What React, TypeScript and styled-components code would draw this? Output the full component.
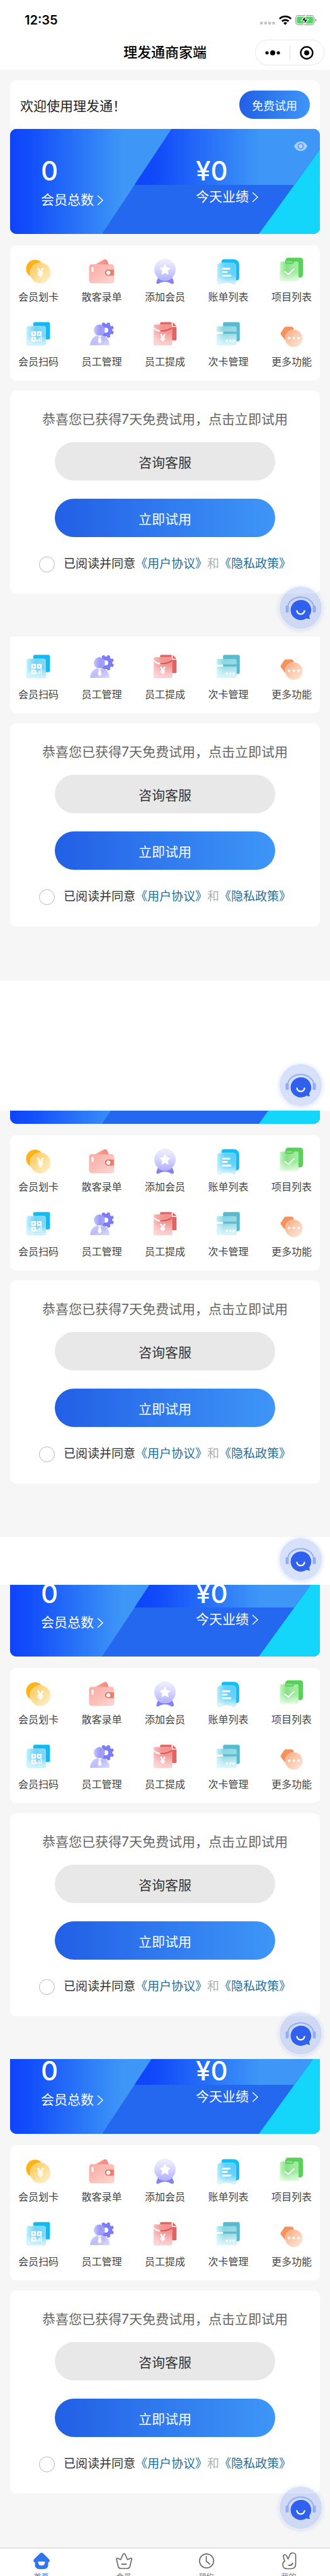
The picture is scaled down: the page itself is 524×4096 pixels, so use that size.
import React, { useId } from "react";
import styled, { createGlobalStyle } from "styled-components";

const GlobalStyle = createGlobalStyle`
  *, *::before, *::after { box-sizing: border-box; }
  body {
    margin: 0;
    background: #fff;
    color: #333;
    font-family: Inter, "Noto Sans CJK SC", sans-serif;
  }
  button { font: inherit; border: 0; padding: 0; cursor: pointer; }
  a { text-decoration: none; }
  svg { display: block; overflow: visible; }
`;

/* ---------- header ---------- */

const Header = styled.header`
  background: #fff;
  height: 111px;
`;

const StatusBar = styled.div`
  display: flex;
  align-items: center;
  justify-content: space-between;
  height: 63px;
  padding: 0 21px 0 39px;
`;

const Clock = styled.time`
  font-size: 20px;
  font-weight: 600;
  line-height: 24px;
  color: #000;
`;

const StatusIcons = styled.div`
  display: flex;
  align-items: center;
  gap: 6px;
`;

const NavBar = styled.div`
  display: grid;
  grid-template-columns: 1fr auto 1fr;
  padding: 0 9px;
`;

const Title = styled.h1`
  grid-column: 2;
  margin: 0;
  font-size: 22px;
  font-weight: 500;
  line-height: 41px;
  color: #000;
`;

const Capsule = styled.div`
  justify-self: end;
  display: flex;
  align-items: center;
  width: 110px;
  height: 41px;
  border: 1px solid #e8e8e8;
  border-radius: 21px;
`;

const CapsuleButton = styled.button`
  flex: 1;
  display: flex;
  justify-content: center;
  align-items: center;
  height: 24px;
  background: none;

  & + & { border-left: 1px solid #ddd; }
`;

/* ---------- screens ---------- */

const Screen = styled.section<{ $bottom: number; $top?: number }>`
  position: relative;
  display: flex;
  flex-direction: column;
  background: #f6f6f6;
  padding: ${(p) => p.$top ?? 0}px 16px ${(p) => p.$bottom}px;
`;

const Blank = styled.div<{ $height: number }>`
  position: relative;
  height: ${(p) => p.$height}px;
  background: #fff;
`;

const Welcome = styled.div`
  display: flex;
  align-items: center;
  justify-content: space-between;
  height: 77px;
  padding: 0 16px;
  background: #fff;
  border-radius: 10px 10px 0 0;
  font-size: 21px;
  color: #222;
`;

const TrialPill = styled.button`
  width: 112px;
  height: 45px;
  border-radius: 22px;
  background: linear-gradient(90deg, #225fe6, #3e96f7);
  color: #fff;
  font-size: 18px;
`;

/* ---------- banner ---------- */

const BannerView = styled.div<{ $height: number }>`
  display: flex;
  flex-direction: column;
  justify-content: flex-end;
  height: ${(p) => p.$height}px;
  overflow: hidden;
  margin-bottom: 18px;
`;

const BannerCard = styled.div`
  position: relative;
  flex: none;
  display: grid;
  grid-template-columns: 1fr 1fr;
  height: 167px;
  border-radius: 10px;
  overflow: hidden;
  color: #fff;
`;

const BannerArt = styled.svg`
  position: absolute;
  inset: 0;
  width: 100%;
  height: 100%;
`;

const Stat = styled.div`
  position: relative;
  display: flex;
  flex-direction: column;
  align-items: flex-start;
  gap: 4px;
  padding: 45px 0 0 49px;
`;

const StatValue = styled.strong`
  font-size: 42px;
  font-weight: 500;
  line-height: 44px;
`;

const StatLink = styled.a<{ $line: number }>`
  display: flex;
  align-items: center;
  gap: 5px;
  color: #fff;
  font-size: 21px;
  line-height: ${(p) => p.$line}px;
`;

const EyeButton = styled.button`
  position: absolute;
  top: 20px;
  right: 20px;
  background: none;
`;

/* ---------- feature grid ---------- */

const Features = styled.div<{ $cut?: boolean }>`
  display: flex;
  flex-direction: column;
  gap: 27px;
  padding: ${(p) => (p.$cut ? 27 : 21)}px 13px 19px;
  margin-bottom: 16px;
  background: #fff;
  border-radius: ${(p) => (p.$cut ? "0 0 10px 10px" : "10px")};
`;

const FeatureRow = styled.div<{ $gap: number }>`
  display: flex;
  justify-content: space-between;

  & > a { gap: ${(p) => p.$gap}px; }
`;

const Feature = styled.a`
  display: flex;
  flex-direction: column;
  align-items: center;
  color: #444;
  font-size: 16px;
  line-height: 22px;
`;

/* ---------- trial card ---------- */

const TrialCard = styled.div`
  display: flex;
  flex-direction: column;
  align-items: center;
  padding: 31px 0 34px;
  background: #fff;
  border-radius: 10px;
`;

const Notice = styled.p`
  margin: 0 0 21px;
  font-size: 21px;
  line-height: 30px;
  color: #666;
  white-space: nowrap;
`;

const WideButton = styled.button<{ $primary?: boolean }>`
  width: 71%;
  height: 61px;
  border-radius: 31px;
  font-size: 21px;
  color: ${(p) => (p.$primary ? "#fff" : "#333")};
  background: ${(p) => (p.$primary ? "linear-gradient(90deg, #225fe6, #3e96f7)" : "#e8e8e8")};

  & + & { margin-top: 29px; }
`;

const Agreement = styled.div`
  display: flex;
  align-items: center;
  margin-top: 30px;
  font-size: 19px;
  line-height: 26px;
  color: #b2b2b2;
  white-space: nowrap;

  label { color: #333; }
  a { color: #1b6f9f; }
`;

const Tick = styled.input`
  appearance: none;
  width: 25px;
  height: 25px;
  margin: 0 14px 0 0;
  border: 1px solid #b8b8b8;
  border-radius: 50%;
  background: #fff;
`;

/* ---------- floating support button ---------- */

const SupportButton = styled.button<{ $bottom: number }>`
  position: absolute;
  right: 12px;
  bottom: ${(p) => p.$bottom}px;
  z-index: 1;
  width: 69px;
  height: 69px;
  border: 1px solid #f0f4ff;
  border-radius: 50%;
  background: rgba(60, 103, 232, 0.2);
  box-shadow: 0 1px 6px rgba(60, 103, 232, 0.2);
  display: flex;
  align-items: center;
  justify-content: center;
`;

/* ---------- tab bar ---------- */

const TabBar = styled.nav`
  display: grid;
  grid-template-columns: repeat(4, 1fr);
  height: 45px;
  overflow: hidden;
  background: #fff;
  border-top: 1px solid #ccc;
`;

const Tab = styled.a<{ $active?: boolean }>`
  display: flex;
  flex-direction: column;
  align-items: center;
  gap: 5px;
  padding-top: 7px;
  font-size: 12px;
  line-height: 16px;
  color: ${(p) => (p.$active ? "#3274ee" : "#777")};
`;

/* ---------- drawings ---------- */

const DefsSvg = styled.svg`
  position: absolute;
  width: 0;
  height: 0;
`;

type Stop = [string, string, number?];

const Grad = ({ id, stops, dir = "v" }: { id: string; stops: Stop[]; dir?: "v" | "h" | "d" }) => (
  <linearGradient id={id} x1="0" y1="0" x2={dir === "v" ? "0" : "1"} y2={dir === "h" ? "0" : "1"}>
    {stops.map(([offset, color, opacity]) => (
      <stop key={offset} offset={offset} stopColor={color} stopOpacity={opacity ?? 1} />
    ))}
  </linearGradient>
);

const Defs = () => (
  <DefsSvg aria-hidden="true">
    <defs>
      <Grad id="panelLeft" dir="h" stops={[["0", "#0f44fa"], ["0.12", "#124efa"], ["0.7", "#3e97f7"], ["1", "#3e97f7"]]} />
      <Grad id="panelRight" dir="h" stops={[["0", "#0f44fa"], ["0.1", "#1048fa"], ["0.68", "#3e97f7"], ["1", "#3e97f7"]]} />
      <Grad id="coin" dir="d" stops={[["0", "#fdc552"], ["0.45", "#fddb8d"], ["1", "#fff3d4"]]} />
      <Grad id="walletBack" dir="h" stops={[["0", "#f9a597"], ["1", "#f4867b"]]} />
      <Grad id="wallet" dir="d" stops={[["0", "#fbaaa2"], ["0.6", "#fcc3bd"], ["1", "#fdd8d4"]]} />
      <Grad id="clasp" dir="h" stops={[["0", "#df5a48"], ["1", "#f68474"]]} />
      <Grad id="medal" stops={[["0", "#f1f0ff"], ["0.5", "#d6d5fd"], ["1", "#b1affc"]]} />
      <Grad id="bill" dir="h" stops={[["0", "#aeeaff"], ["0.4", "#5fd3fd"], ["1", "#55cdfb"]]} />
      <Grad id="billFade" stops={[["0", "#ffffff", 0], ["0.6", "#ffffff", 0.1], ["1", "#ffffff", 0.8]]} />
      <Grad id="board" dir="h" stops={[["0", "#c5f6c4"], ["0.35", "#86e086"], ["0.6", "#97e896"], ["1", "#a5eea4"]]} />
      <Grad id="boardFade" stops={[["0", "#ffffff", 0], ["0.55", "#ffffff", 0], ["1", "#dfffdd", 0.9]]} />
      <Grad id="qr" dir="h" stops={[["0", "#bdeffe"], ["0.45", "#67cff8"], ["1", "#7ad8fb"]]} />
      <Grad id="qrFade" stops={[["0", "#ffffff", 0.1], ["0.5", "#ffffff", 0], ["1", "#e2f9ff", 0.9]]} />
      <Grad id="head" dir="h" stops={[["0", "#c6c6fb"], ["0.55", "#9a99f9"], ["1", "#a5a4fb"]]} />
      <Grad id="torso" dir="d" stops={[["0", "#d3d3fc"], ["0.5", "#bdbcfb"], ["1", "#dcdcfd"]]} />
      <Grad id="envelope" dir="h" stops={[["0", "#f9bcbc"], ["0.45", "#f39593"], ["1", "#f2908f"]]} />
      <Grad id="envelopeFade" stops={[["0", "#ffffff", 0], ["0.4", "#ffffff", 0.05], ["1", "#ffe3e3", 0.8]]} />
      <Grad id="card" dir="h" stops={[["0", "#c1eef6"], ["0.35", "#86d5e1"], ["1", "#93dae6"]]} />
      <Grad id="cardFade" stops={[["0", "#ffffff", 0], ["0.4", "#ffffff", 0.1], ["1", "#e0fbff", 0.9]]} />
      <Grad id="more" dir="d" stops={[["0", "#f7a474"], ["0.4", "#fac5a6"], ["1", "#feeadd"]]} />
    </defs>
  </DefsSvg>
);

const Art = ({ children }: { children: React.ReactNode }) => (
  <svg width="40" height="40" viewBox="0 0 190 190" aria-hidden="true">
    {children}
  </svg>
);

const Yuan = ({ x, y, size }: { x: number; y: number; size: number }) => (
  <text x={x} y={y} fontSize={size} fontFamily="Inter, sans-serif" fontWeight="700" fill="#fff" textAnchor="middle">
    ¥
  </text>
);

const CoinIcon = () => (
  <Art>
    <circle cx="69" cy="77" r="67" fill="#fdb41c" />
    <circle cx="109" cy="109" r="77" fill="url(#coin)" stroke="#fde5ac" strokeWidth="3" />
    <Yuan x={111} y={143} size={94} />
  </Art>
);

const WalletIcon = () => (
  <Art>
    <path d="M44 48 112 10q20-10 28 8l12 30z" fill="url(#walletBack)" />
    <rect x="4" y="45" width="185" height="140" rx="18" fill="url(#wallet)" stroke="#fbb5ae" strokeWidth="3" />
    <rect x="21" y="64" width="15" height="38" rx="6" fill="#fff" />
    <path d="M190 84h-44a23 23 0 0 0 0 46h44z" fill="url(#clasp)" />
    <circle cx="147" cy="107" r="16" fill="#fff" />
  </Art>
);

const MedalIcon = () => (
  <Art>
    <path d="M44 140 30 178q-2 16 14 14 50-32 102 0 16 2 16-14l-14-38z" fill="#8281f8" />
    <circle cx="95" cy="86" r="80" fill="url(#medal)" stroke="#dddcfd" strokeWidth="3" />
    <path
      d="m95 47 11 23 26 4-19 18 5 26-23-13-23 13 5-26-19-18 26-4z"
      fill="#fff"
      stroke="#fff"
      strokeWidth="6"
      strokeLinejoin="round"
    />
  </Art>
);

const billSheet =
  "M16 58q0-24 24-24h90q24 0 24 24v116q0 20-20 18-14-12-49-12t-49 12q-20 2-20-18z";

const BillIcon = () => (
  <Art>
    <path d="M66 6h68q46 0 46 46v92q0 23-26 23H46V26q0-20 20-20z" fill="#13bdf6" />
    <path d={billSheet} fill="url(#bill)" />
    <path d={billSheet} fill="url(#billFade)" stroke="#a9e8fd" strokeWidth="3" />
    <path d="M57 77h49M57 102h29M57 129h57" stroke="#fff" strokeWidth="14" strokeLinecap="round" />
  </Art>
);

const boardSheet =
  "M17 24h34v6q0 6 8 6h44q8 0 8-12h26q10 0 10 10v124q0 10-10 10H17q-10 0-10-10V34q0-10 10-10z";

const BoardIcon = () => (
  <Art>
    <rect x="49" y="-6" width="132" height="150" rx="20" fill="#5bd05a" />
    <path d={boardSheet} fill="url(#board)" />
    <path d={boardSheet} fill="url(#boardFade)" />
    <rect x="50" y="14" width="58" height="24" rx="9" fill="#7ee07d" stroke="#48bd49" strokeWidth="5" />
    <path d="m44 100 27 20 42-40" fill="none" stroke="#fff" strokeWidth="10" strokeLinecap="round" strokeLinejoin="round" />
  </Art>
);

const QrIcon = () => (
  <Art>
    <rect x="56" y="11" width="126" height="130" rx="12" fill="#12b9f5" />
    <rect x="8" y="41" width="141" height="144" rx="12" fill="url(#qr)" />
    <rect x="8" y="41" width="141" height="144" rx="12" fill="url(#qrFade)" stroke="#b3ecfe" strokeWidth="3" />
    <path d="M47 85h24v24H47zM90 85h24v24H90zM47 128h24v24H47z" fill="none" stroke="#fff" strokeWidth="12" />
    <path d="M85 158v-16M101 158v-29M116 158v-41" stroke="#fff" strokeWidth="8" />
  </Art>
);

const StaffIcon = () => (
  <Art>
    <circle cx="130" cy="71" r="48" fill="#7d7cf7" />
    {[22, 67, 112, 157].map((angle) => (
      <rect key={angle} x="118" y="11" width="24" height="120" rx="6" fill="#7d7cf7" transform={`rotate(${angle} 130 71)`} />
    ))}
    <circle cx="128" cy="71" r="19" fill="#fff" />
    <path d="M10 185C10 140 42 109 84 109s73 31 73 76z" fill="url(#torso)" />
    <circle cx="80" cy="71" r="42" fill="url(#head)" />
    <path d="M70 112h24l-3 11H73zM75 127h14l8 32-15 13-14-13z" fill="#fff" />
  </Art>
);

const EnvelopeIcon = () => (
  <Art>
    <path d="M66 11h79v36h37v94q0 8-8 8H58V19q0-8 8-8z" fill="#e06462" />
    <path d="m154 12 28 28h-28z" fill="#df5e5d" />
    <rect x="10" y="29" width="138" height="156" rx="10" fill="url(#envelope)" />
    <rect x="10" y="29" width="138" height="156" rx="10" fill="url(#envelopeFade)" stroke="#f9c2c2" strokeWidth="2" />
    <path d="M58 72q52 4 90-24v12q-38 26-90 20z" fill="#dd5c5b" />
    <path d="M10 49q18 20 48 23v11q-32-4-48-24z" fill="#fff" />
    <Yuan x={79} y={158} size={76} />
  </Art>
);

const CardIcon = () => (
  <Art>
    <rect x="58" y="11" width="126" height="144" rx="12" fill="#59bacd" />
    <path d="M10 41h138q12 0 12 12v120q0 12-12 12H10z" fill="url(#card)" />
    <path d="M10 41h138q12 0 12 12v120q0 12-12 12H10z" fill="url(#cardFade)" />
    <rect x="58" y="83" width="102" height="15" fill="#5fb9ca" />
    <rect x="10" y="85" width="48" height="14" fill="#fff" />
    <path d="M78 145h15v15H78zM106 145h15v15h-15zM130 145h15v15h-15z" fill="#fff" />
  </Art>
);

const MoreIcon = () => (
  <Art>
    <path d="M50 45h46q8 0 12 8l14 40-66 54q-8 3-13-6L14 104q-4-7 0-14l26-39q4-6 10-6z" fill="#f3935f" />
    <circle cx="112" cy="133" r="65" fill="url(#more)" stroke="#fddcc8" strokeWidth="3" />
    <circle cx="76" cy="131" r="10" fill="#fff" />
    <circle cx="112" cy="131" r="10" fill="#fff" />
    <circle cx="148" cy="131" r="10" fill="#fff" />
  </Art>
);

const Chevron = () => (
  <svg width="10" height="17" viewBox="0 0 10 17" fill="none" stroke="#fff" strokeWidth="1.4" aria-hidden="true">
    <path d="m1 1 8 7.500-8 7.500" />
  </svg>
);

const SupportArt = () => (
  <svg width="49" height="40" viewBox="-24.500 -20 49 40" aria-hidden="true">
    <path d="M-20.500-1a20.500 16.500 0 0 1 41 0" fill="none" stroke="#93acf8" strokeWidth="2" />
    <rect x="-24" y="-4" width="5" height="11" rx="1.500" fill="#93acf8" />
    <rect x="19" y="-4" width="5" height="11" rx="1.500" fill="#93acf8" />
    <path d="M0-13a16 16 0 1 0 9 29.200l5.500 1.300-1-5A16 16 0 0 0 0-13z" fill="#2f60ee" />
    <path d="M-6 4.500c1.500 6.500 10.500 6.500 12 0" fill="none" stroke="#fff" strokeWidth="2.400" strokeLinecap="round" />
  </svg>
);

/* ---------- composed parts ---------- */

const Support = ({ bottom }: { bottom: number }) => (
  <SupportButton type="button" aria-label="客服" $bottom={bottom}>
    <SupportArt />
  </SupportButton>
);

const BannerStats = () => (
  <>
    <Stat>
      <StatValue>0</StatValue>
      <StatLink href="#members" $line={40}>
        会员总数
        <Chevron />
      </StatLink>
    </Stat>
    <Stat>
      <StatValue>¥0</StatValue>
      <StatLink href="#sales" $line={30}>
        今天业绩
        <Chevron />
      </StatLink>
    </Stat>
    <EyeButton type="button" aria-label="显示金额">
      <svg width="21" height="15" viewBox="0 0 21 15">
        <path d="M0 7.500C4-2.500 17-2.500 21 7.500 17 17.500 4 17.500 0 7.500z" fill="#a9cdfb" />
        <circle cx="10.500" cy="7.500" r="4" fill="#b5d3fc" stroke="#4b96f5" strokeWidth="1.600" />
      </svg>
    </EyeButton>
  </>
);

const Banner = ({ visible = 167, children }: { visible?: number; children?: React.ReactNode }) => (
  <BannerView $height={visible}>
    <BannerCard>
      <BannerArt viewBox="0 0 492 167" preserveAspectRatio="none" aria-hidden="true">
        <rect width="492" height="167" fill="#2368ef" />
        <path d="M0 0h256.500L146 167H0z" fill="url(#panelLeft)" />
        <path d="M256.500 0H492v33l-41 56H197.500z" fill="url(#panelRight)" />
        <path d="M492 33v134h-97z" fill="#14d6fb" />
      </BannerArt>
      {children}
    </BannerCard>
  </BannerView>
);

const firstRow = [
  { name: "会员划卡", Icon: CoinIcon },
  { name: "散客录单", Icon: WalletIcon },
  { name: "添加会员", Icon: MedalIcon },
  { name: "账单列表", Icon: BillIcon },
  { name: "项目列表", Icon: BoardIcon },
];

const secondRow = [
  { name: "会员扫码", Icon: QrIcon },
  { name: "员工管理", Icon: StaffIcon },
  { name: "员工提成", Icon: EnvelopeIcon },
  { name: "次卡管理", Icon: CardIcon },
  { name: "更多功能", Icon: MoreIcon },
];

const Row = ({ items, gap }: { items: typeof firstRow; gap: number }) => (
  <FeatureRow $gap={gap}>
    {items.map(({ name, Icon }) => (
      <Feature key={name} href="#feature">
        <Icon />
        {name}
      </Feature>
    ))}
  </FeatureRow>
);

const FeatureGrid = ({ cut }: { cut?: boolean }) => (
  <Features $cut={cut}>
    {!cut && <Row items={firstRow} gap={10} />}
    <Row items={secondRow} gap={14} />
  </Features>
);

const Trial = () => {
  const id = useId();
  return (
    <TrialCard>
      <Notice>恭喜您已获得7天免费试用，点击立即试用</Notice>
      <WideButton type="button">咨询客服</WideButton>
      <WideButton type="button" $primary>
        立即试用
      </WideButton>
      <Agreement>
        <Tick type="checkbox" id={id} />
        <label htmlFor={id}>已阅读并同意</label>
        <a href="#terms">《用户协议》</a>
        <span>和</span>
        <a href="#privacy">《隐私政策》</a>
      </Agreement>
    </TrialCard>
  );
};

export default function App() {
  return (
    <>
      <GlobalStyle />
      <Defs />
      <Header>
        <StatusBar>
          <Clock>12:35</Clock>
          <StatusIcons>
            <svg width="24" height="16" viewBox="0 0 24 16" fill="#c4c4c4" aria-hidden="true">
              <rect x="0" y="10.500" width="4.400" height="4.500" rx="1.200" />
              <rect x="6.500" y="10.500" width="4.400" height="4.500" rx="1.200" />
              <rect x="13" y="10.500" width="4.400" height="4.500" rx="1.200" />
              <rect x="19.300" y="10.500" width="4.400" height="4.500" rx="1.200" />
            </svg>
            <svg width="20" height="16" viewBox="0 0 20 16" fill="none" stroke="#000" strokeWidth="2.900" aria-hidden="true">
              <path d="M1 5.900a12.700 12.700 0 0 1 18 0" />
              <path d="M4.700 9.900a7.600 7.600 0 0 1 10.600 0" />
              <path d="M7 12.600a4.200 4.200 0 0 1 6 0L10 15.800z" fill="#000" stroke="none" />
            </svg>
            <svg width="34" height="16" viewBox="0 0 34 16" aria-hidden="true">
              <rect x="0.700" y="0.700" width="29" height="14.600" rx="4" fill="none" stroke="#9a9a9a" strokeWidth="1.300" />
              <path d="M31.500 5.500q2 .8 2 2.500t-2 2.500z" fill="#9a9a9a" />
              <rect x="2.400" y="2.400" width="25.600" height="11.200" rx="2.600" fill="#4cd663" />
              <path d="M16.500 0.500 9.500 9h5L13 15.500l7.500-8.500h-5z" fill="#000" stroke="#fff" strokeWidth="1.200" />
            </svg>
          </StatusIcons>
        </StatusBar>
        <NavBar>
          <Title>理发通商家端</Title>
          <Capsule>
            <CapsuleButton type="button" aria-label="更多">
              <svg width="24" height="8" viewBox="0 0 24 8">
                <circle cx="3" cy="4" r="2.600" />
                <circle cx="12" cy="4" r="4" />
                <circle cx="21" cy="4" r="2.600" />
              </svg>
            </CapsuleButton>
            <CapsuleButton type="button" aria-label="关闭">
              <svg width="22" height="22" viewBox="0 0 22 22">
                <circle cx="11" cy="11" r="9.500" fill="none" stroke="#000" strokeWidth="2.400" />
                <circle cx="11" cy="11" r="4" />
              </svg>
            </CapsuleButton>
          </Capsule>
        </NavBar>
      </Header>

      <main>
        <Screen $top={17} $bottom={68}>
          <Welcome>
            <span>欢迎使用理发通！</span>
            <TrialPill type="button">免费试用</TrialPill>
          </Welcome>
          <Banner>
            <BannerStats />
          </Banner>
          <FeatureGrid />
          <Trial />
          <Support bottom={11} />
        </Screen>

        <Screen $bottom={86}>
          <FeatureGrid cut />
          <Trial />
        </Screen>
        <Blank $height={207}>
          <Support bottom={6} />
        </Blank>

        <Screen $bottom={85}>
          <Banner visible={21} />
          <FeatureGrid />
          <Trial />
        </Screen>
        <Blank $height={76}>
          <Support bottom={6} />
        </Blank>

        <Screen $bottom={68}>
          <Banner visible={114}>
            <BannerStats />
          </Banner>
          <FeatureGrid />
          <Trial />
          <Support bottom={6} />
        </Screen>

        <Screen $bottom={86}>
          <Banner visible={119}>
            <BannerStats />
          </Banner>
          <FeatureGrid />
          <Trial />
          <Support bottom={29} />
        </Screen>
      </main>

      <TabBar>
        <Tab href="#home" $active>
          <svg width="26" height="26" viewBox="0 0 26 26" aria-hidden="true">
            <path
              d="M13 0q1.500 0 2.800 1.200l9 9q2 2.300.3 4.300l-1.600 1v3.500q0 7-7 7h-7q-7 0-7-7v-3.500l-1.600-1q-1.700-2 .3-4.300l9-9Q11.500 0 13 0z"
              fill="#3274ee"
            />
            <path d="M7.500 14h11q0 6.500-5.500 6.500T7.500 14z" fill="#fff" />
          </svg>
          首页
        </Tab>
        <Tab href="#members">
          <svg width="26" height="26" viewBox="0 0 26 26" fill="none" stroke="#6b6b6b" strokeWidth="1.700" strokeLinejoin="round" strokeLinecap="round" aria-hidden="true">
            <path d="M3.500 21 1 10.500q-.3-2.300 1.800-1.700L7.500 11l3.800-8.300q1.700-2.600 3.400 0L18.500 11l4.700-2.200q2.100-.6 1.800 1.700L22.500 21q-.7 4-4.500 4H8q-3.800 0-4.500-4z" />
            <path d="M9.500 18.300h7" strokeWidth="2" />
          </svg>
          会员
        </Tab>
        <Tab href="#booking">
          <svg width="26" height="26" viewBox="0 0 26 26" fill="none" stroke="#6b6b6b" strokeWidth="1.700" strokeLinecap="round" strokeLinejoin="round" aria-hidden="true">
            <circle cx="13" cy="13" r="11.200" />
            <path d="M12.500 6v7.500l5.500 4.500" />
          </svg>
          预约
        </Tab>
        <Tab href="#me">
          <svg width="26" height="26" viewBox="0 0 26 26" fill="none" stroke="#6b6b6b" strokeWidth="1.700" strokeLinecap="round" strokeLinejoin="round" aria-hidden="true">
            <path d="M6 13.500 4 6.500q-.5-3 2-3.500 2-.2 3 2l2.500 5 3-7.300q1.200-2.500 5-2.200 4 .5 4 3.500v14q0 7.500-8 7.500H10q-7 0-7-6.500 0-4 3-5.500z" />
            <path d="M12.500 19.800q5 1 6-3" strokeWidth="2" />
          </svg>
          我的
        </Tab>
      </TabBar>
    </>
  );
}
